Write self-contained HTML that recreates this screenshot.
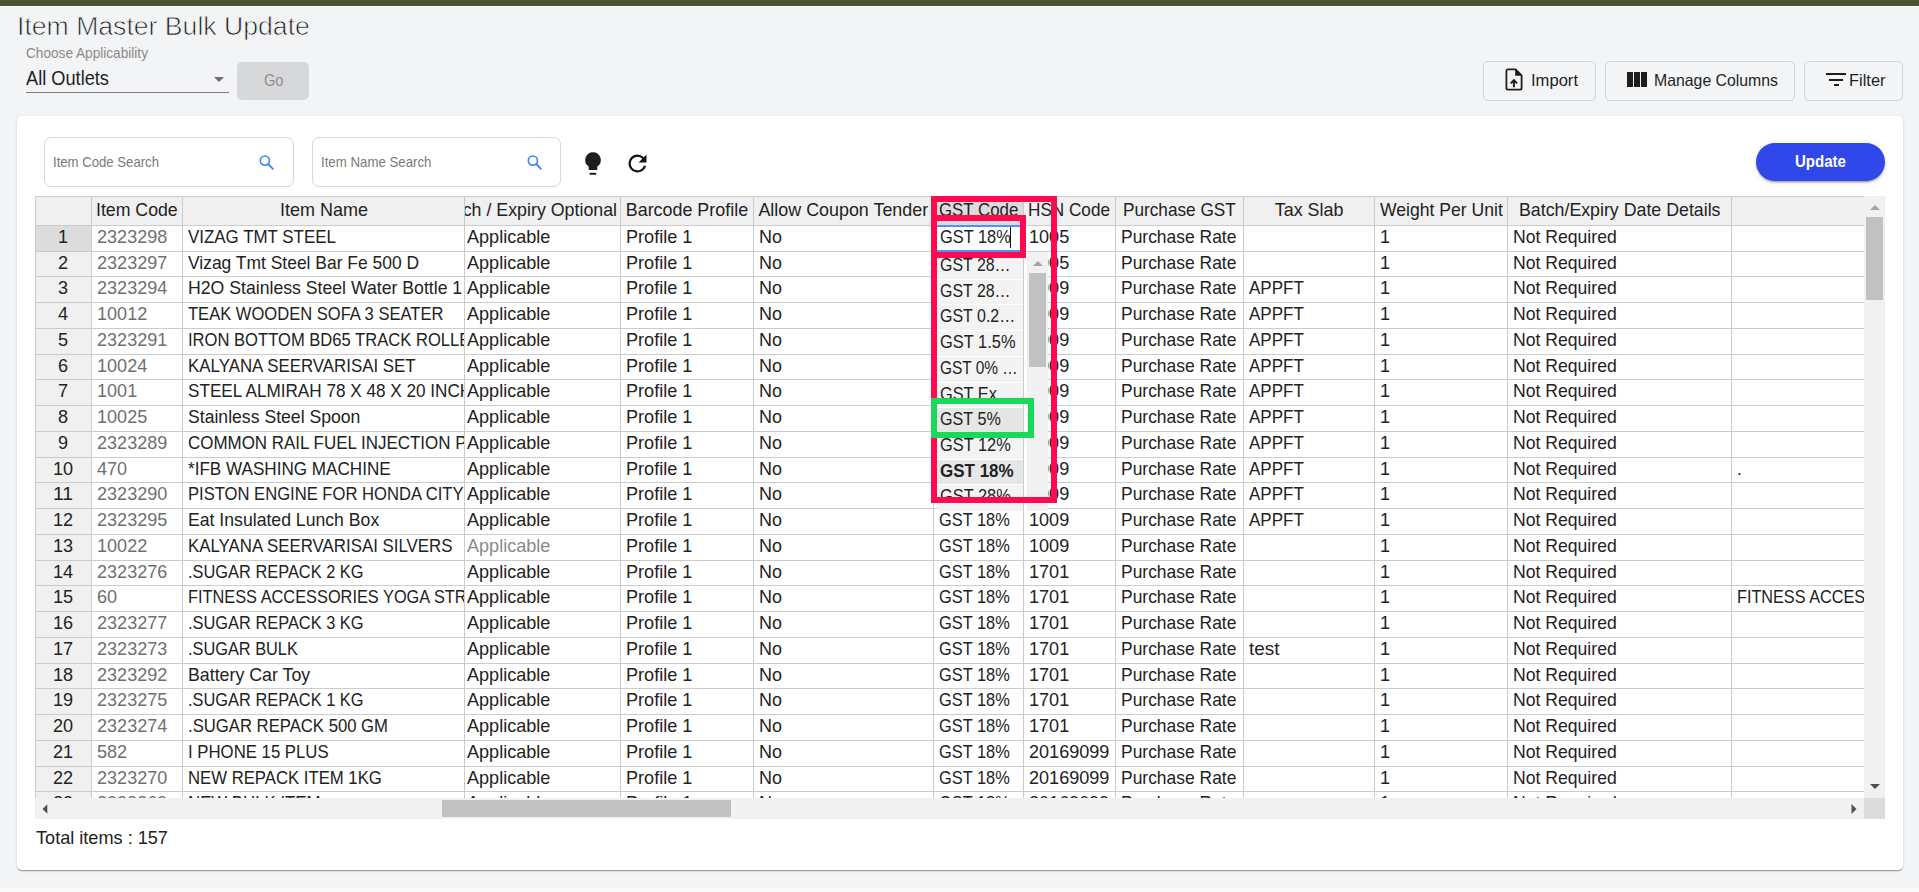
<!DOCTYPE html>
<html><head><meta charset="utf-8"><style>
html,body{margin:0;padding:0;}
body{width:1919px;height:892px;overflow:hidden;background:#f3f4f6;position:relative;font-family:"Liberation Sans",sans-serif;}
.r{position:absolute;box-sizing:content-box;}
.t{position:absolute;white-space:nowrap;line-height:1;transform-origin:0 0;}
.c{position:absolute;overflow:hidden;}
</style></head><body>
<div class="r" style="left:0px;top:0px;width:1919px;height:6px;background:#4b5533;"></div>
<div class="r" style="left:0px;top:6px;width:1919px;height:1px;background:#fbfbfb;"></div>
<div class="t" style="left:17.00px;top:12.72px;font-size:26.2px;color:#1e1e1e;transform:scaleX(1.0162);-webkit-text-stroke:0.75px #f3f4f6;">Item Master Bulk Update</div>
<div class="t" style="left:26.30px;top:46.14px;font-size:14.6px;color:#8a8a8a;transform:scaleX(0.9337);">Choose Applicability</div>
<div class="t" style="left:25.80px;top:68.68px;font-size:19.4px;color:#1f1f1f;transform:scaleX(0.9388);">All Outlets</div>
<div class="r" style="left:26px;top:92px;width:203px;height:1px;background:#7b7b80;"></div>
<svg class="r" style="left:213px;top:76px" width="12" height="7"><path d="M1 1h10l-5 5z" fill="#6e6d72"/></svg>
<div class="r" style="left:237px;top:62px;width:72px;height:38px;background:#d7d8da;border-radius:5px"></div>
<div class="t" style="left:263.55px;top:71.79px;font-size:16.2px;color:#8f8f8f;transform:scaleX(0.9023);">Go</div>
<div class="r" style="left:1483px;top:61px;width:111px;height:38px;border:1px solid #d2d3d6;border-radius:5px"></div>
<div class="r" style="left:1605px;top:61px;width:188px;height:38px;border:1px solid #d2d3d6;border-radius:5px"></div>
<div class="r" style="left:1804px;top:61px;width:97px;height:38px;border:1px solid #d2d3d6;border-radius:5px"></div>
<svg class="r" style="left:1503px;top:67px" width="22" height="25" viewBox="0 0 22 25"><path d="M4.9 2.4H12.6L18.6 8.4V21a1.6 1.6 0 0 1-1.6 1.6H5a1.6 1.6 0 0 1-1.6-1.6V4a1.6 1.6 0 0 1 1.5-1.6z" fill="none" stroke="#1e1e1e" stroke-width="1.8"/><path d="M12.2 2.4V8.8H18.6z" fill="#1e1e1e"/><path d="M10.9 20.2V13.2M7.7 16.4l3.2-3.2 3.2 3.2" fill="none" stroke="#1e1e1e" stroke-width="2"/></svg>
<div class="t" style="left:1530.50px;top:71.53px;font-size:16.5px;color:#1f1f1f;transform:scaleX(1.0051);">Import</div>
<div class="r" style="left:1627px;top:72px;width:5.5px;height:15px;background:#1e1e1e;"></div>
<div class="r" style="left:1634px;top:72px;width:5.5px;height:15px;background:#1e1e1e;"></div>
<div class="r" style="left:1641px;top:72px;width:5.5px;height:15px;background:#1e1e1e;"></div>
<div class="t" style="left:1653.80px;top:71.53px;font-size:16.5px;color:#1f1f1f;transform:scaleX(0.9589);">Manage Columns</div>
<div class="r" style="left:1826px;top:73px;width:20px;height:2px;background:#1e1e1e;"></div>
<div class="r" style="left:1829px;top:78.5px;width:14px;height:2.0px;background:#1e1e1e;"></div>
<div class="r" style="left:1834px;top:84px;width:4.5px;height:2px;background:#1e1e1e;"></div>
<div class="t" style="left:1848.70px;top:71.53px;font-size:16.5px;color:#1f1f1f;transform:scaleX(0.9955);">Filter</div>
<div class="r" style="left:17px;top:116px;width:1886px;height:754px;background:#fff;border-radius:5px;box-shadow:0px 2px 1px -1px rgba(0,0,0,0.2),0px 1px 1px 0px rgba(0,0,0,0.14),0px 1px 3px 0px rgba(0,0,0,0.12)"></div>
<div class="r" style="left:44px;top:137px;width:248px;height:48px;border:1px solid #d6d6d6;border-radius:7px"></div>
<div class="t" style="left:53.30px;top:155.00px;font-size:14.3px;color:#7a7a7a;transform:scaleX(0.9197);">Item Code Search</div>
<svg class="r" style="left:258px;top:154px" width="17" height="17" viewBox="0 0 17 17"><circle cx="6.9" cy="6.6" r="4.6" fill="none" stroke="#3f83ee" stroke-width="1.6"/><path d="M10.2 10l5.2 5.3" stroke="#3f83ee" stroke-width="1.8"/></svg>
<div class="r" style="left:312px;top:137px;width:247px;height:48px;border:1px solid #d6d6d6;border-radius:7px"></div>
<div class="t" style="left:320.80px;top:155.00px;font-size:14.3px;color:#7a7a7a;transform:scaleX(0.9269);">Item Name Search</div>
<svg class="r" style="left:526px;top:154px" width="17" height="17" viewBox="0 0 17 17"><circle cx="6.9" cy="6.6" r="4.6" fill="none" stroke="#3f83ee" stroke-width="1.6"/><path d="M10.2 10l5.2 5.3" stroke="#3f83ee" stroke-width="1.8"/></svg>
<svg class="r" style="left:583px;top:151px" width="20" height="26" viewBox="0 0 20 26"><path d="M10 1.2a7.8 7.8 0 0 0-4.3 14.3V19h8.6v-3.5A7.8 7.8 0 0 0 10 1.2z" fill="#1e1e1e"/><rect x="6.6" y="21.8" width="6.6" height="2" fill="#1e1e1e"/></svg>
<svg class="r" style="left:623.8px;top:149.6px" width="27" height="27" viewBox="0 0 24 24"><path d="M17.65 6.35A7.96 7.96 0 0 0 12 4a8 8 0 1 0 7.73 10h-2.08A6 6 0 1 1 12 6c1.66 0 3.14.69 4.22 1.78L13 11h7V4z" fill="#111"/></svg>
<div class="r" style="left:1756px;top:143px;width:129px;height:38px;background:#3048ea;border-radius:19px;box-shadow:0px 3px 1px -2px rgba(0,0,0,0.2),0px 2px 2px 0px rgba(0,0,0,0.14),0px 1px 5px 0px rgba(0,0,0,0.12)"></div>
<div class="t" style="left:1795.20px;top:153.02px;font-size:16.4px;color:#fff;font-weight:bold;transform:scaleX(0.9176);">Update</div>
<div class="r" style="left:0px;top:888px;width:1919px;height:4px;background:#fafafa;"></div>
<div class="t" style="left:35.50px;top:829.12px;font-size:18.4px;color:#222;transform:scaleX(0.9853);">Total items : 157</div>
<div class="r" style="left:36px;top:197px;width:1828px;height:28px;background:#f0f0f0;"></div>
<div class="r" style="left:36px;top:226px;width:55px;height:572px;background:#f0f0f0;"></div>
<div class="r" style="left:36px;top:226px;width:55px;height:25px;background:#dcdcdc;"></div>
<div class="r" style="left:934px;top:197px;width:89px;height:28px;background:#dcdcdc;"></div>
<div class="c" style="left:92px;top:197px;width:90px;height:28px"><div class="t" style="left:4.12px;top:4.65px;font-size:17.9px;color:#222;transform:scaleX(0.9901);">Item Code</div></div>
<div class="c" style="left:183px;top:197px;width:281px;height:28px"><div class="t" style="left:96.51px;top:4.65px;font-size:17.9px;color:#222;transform:scaleX(1.0052);">Item Name</div></div>
<div class="c" style="left:465px;top:197px;width:155px;height:28px"><div class="t" style="left:-29.34px;top:4.65px;font-size:17.9px;color:#222;transform:scaleX(0.9949);">Batch / Expiry Optional</div></div>
<div class="c" style="left:621px;top:197px;width:132px;height:28px"><div class="t" style="left:4.77px;top:4.65px;font-size:17.9px;color:#222;">Barcode Profile</div></div>
<div class="c" style="left:754px;top:197px;width:179px;height:28px"><div class="t" style="left:4.42px;top:4.65px;font-size:17.9px;color:#222;">Allow Coupon Tender</div></div>
<div class="c" style="left:934px;top:197px;width:89px;height:28px"><div class="t" style="left:4.82px;top:4.65px;font-size:17.9px;color:#222;transform:scaleX(0.9421);">GST Code</div></div>
<div class="c" style="left:1024px;top:197px;width:91px;height:28px"><div class="t" style="left:4.49px;top:4.65px;font-size:17.9px;color:#222;transform:scaleX(0.9587);">HSN Code</div></div>
<div class="c" style="left:1116px;top:197px;width:127px;height:28px"><div class="t" style="left:7.07px;top:4.65px;font-size:17.9px;color:#222;transform:scaleX(0.9613);">Purchase GST</div></div>
<div class="c" style="left:1244px;top:197px;width:130px;height:28px"><div class="t" style="left:30.76px;top:4.65px;font-size:17.9px;color:#222;">Tax Slab</div></div>
<div class="c" style="left:1375px;top:197px;width:132px;height:28px"><div class="t" style="left:4.57px;top:4.65px;font-size:17.9px;color:#222;transform:scaleX(0.9826);">Weight Per Unit</div></div>
<div class="c" style="left:1508px;top:197px;width:223px;height:28px"><div class="t" style="left:10.70px;top:4.65px;font-size:17.9px;color:#222;transform:scaleX(0.9933);">Batch/Expiry Date Details</div></div>
<div class="c" style="left:36px;top:226px;width:55px;height:25px"><div class="t" style="left:22.47px;top:3.00px;font-size:17.9px;color:#222;transform:scaleX(1.0096);">1</div></div>
<div class="c" style="left:92px;top:226px;width:90px;height:25px"><div class="t" style="left:4.50px;top:3.00px;font-size:17.9px;color:#6f6f6f;transform:scaleX(1.0096);">2323298</div></div>
<div class="c" style="left:183px;top:226px;width:281px;height:25px"><div class="t" style="left:4.50px;top:3.00px;font-size:17.9px;color:#222;transform:scaleX(0.9453);">VIZAG TMT STEEL</div></div>
<div class="c" style="left:465px;top:226px;width:155px;height:25px"><div class="t" style="left:1.60px;top:3.00px;font-size:17.9px;color:#222;transform:scaleX(1.0101);">Applicable</div></div>
<div class="c" style="left:621px;top:226px;width:132px;height:25px"><div class="t" style="left:4.50px;top:3.00px;font-size:17.9px;color:#222;transform:scaleX(1.0116);">Profile 1</div></div>
<div class="c" style="left:754px;top:226px;width:179px;height:25px"><div class="t" style="left:4.50px;top:3.00px;font-size:17.9px;color:#222;transform:scaleX(1.0037);">No</div></div>
<div class="c" style="left:934px;top:226px;width:89px;height:25px"><div class="t" style="left:4.50px;top:3.00px;font-size:17.9px;color:#222;transform:scaleX(0.9165);">GST 18%</div></div>
<div class="c" style="left:1024px;top:226px;width:91px;height:25px"><div class="t" style="left:4.50px;top:3.00px;font-size:17.9px;color:#222;transform:scaleX(1.0096);">1005</div></div>
<div class="c" style="left:1116px;top:226px;width:127px;height:25px"><div class="t" style="left:4.50px;top:3.00px;font-size:17.9px;color:#222;transform:scaleX(0.9750);">Purchase Rate</div></div>
<div class="c" style="left:1375px;top:226px;width:132px;height:25px"><div class="t" style="left:4.50px;top:3.00px;font-size:17.9px;color:#222;transform:scaleX(1.0096);">1</div></div>
<div class="c" style="left:1508px;top:226px;width:223px;height:25px"><div class="t" style="left:4.50px;top:3.00px;font-size:17.9px;color:#222;transform:scaleX(0.9838);">Not Required</div></div>
<div class="c" style="left:36px;top:252px;width:55px;height:24px"><div class="t" style="left:22.47px;top:3.00px;font-size:17.9px;color:#222;transform:scaleX(1.0096);">2</div></div>
<div class="c" style="left:92px;top:252px;width:90px;height:24px"><div class="t" style="left:4.50px;top:3.00px;font-size:17.9px;color:#6f6f6f;transform:scaleX(1.0096);">2323297</div></div>
<div class="c" style="left:183px;top:252px;width:281px;height:24px"><div class="t" style="left:4.50px;top:3.00px;font-size:17.9px;color:#222;transform:scaleX(0.9751);">Vizag Tmt Steel Bar Fe 500 D</div></div>
<div class="c" style="left:465px;top:252px;width:155px;height:24px"><div class="t" style="left:1.60px;top:3.00px;font-size:17.9px;color:#222;transform:scaleX(1.0101);">Applicable</div></div>
<div class="c" style="left:621px;top:252px;width:132px;height:24px"><div class="t" style="left:4.50px;top:3.00px;font-size:17.9px;color:#222;transform:scaleX(1.0116);">Profile 1</div></div>
<div class="c" style="left:754px;top:252px;width:179px;height:24px"><div class="t" style="left:4.50px;top:3.00px;font-size:17.9px;color:#222;transform:scaleX(1.0037);">No</div></div>
<div class="c" style="left:934px;top:252px;width:89px;height:24px"><div class="t" style="left:4.50px;top:3.00px;font-size:17.9px;color:#222;transform:scaleX(0.9165);">GST 18%</div></div>
<div class="c" style="left:1024px;top:252px;width:91px;height:24px"><div class="t" style="left:4.50px;top:3.00px;font-size:17.9px;color:#222;transform:scaleX(1.0096);">1005</div></div>
<div class="c" style="left:1116px;top:252px;width:127px;height:24px"><div class="t" style="left:4.50px;top:3.00px;font-size:17.9px;color:#222;transform:scaleX(0.9750);">Purchase Rate</div></div>
<div class="c" style="left:1375px;top:252px;width:132px;height:24px"><div class="t" style="left:4.50px;top:3.00px;font-size:17.9px;color:#222;transform:scaleX(1.0096);">1</div></div>
<div class="c" style="left:1508px;top:252px;width:223px;height:24px"><div class="t" style="left:4.50px;top:3.00px;font-size:17.9px;color:#222;transform:scaleX(0.9838);">Not Required</div></div>
<div class="c" style="left:36px;top:277px;width:55px;height:25px"><div class="t" style="left:22.47px;top:3.00px;font-size:17.9px;color:#222;transform:scaleX(1.0096);">3</div></div>
<div class="c" style="left:92px;top:277px;width:90px;height:25px"><div class="t" style="left:4.50px;top:3.00px;font-size:17.9px;color:#6f6f6f;transform:scaleX(1.0096);">2323294</div></div>
<div class="c" style="left:183px;top:277px;width:281px;height:25px"><div class="t" style="left:4.50px;top:3.00px;font-size:17.9px;color:#222;transform:scaleX(0.9871);">H2O Stainless Steel Water Bottle 1 Ltr</div></div>
<div class="c" style="left:465px;top:277px;width:155px;height:25px"><div class="t" style="left:1.60px;top:3.00px;font-size:17.9px;color:#222;transform:scaleX(1.0101);">Applicable</div></div>
<div class="c" style="left:621px;top:277px;width:132px;height:25px"><div class="t" style="left:4.50px;top:3.00px;font-size:17.9px;color:#222;transform:scaleX(1.0116);">Profile 1</div></div>
<div class="c" style="left:754px;top:277px;width:179px;height:25px"><div class="t" style="left:4.50px;top:3.00px;font-size:17.9px;color:#222;transform:scaleX(1.0037);">No</div></div>
<div class="c" style="left:934px;top:277px;width:89px;height:25px"><div class="t" style="left:4.50px;top:3.00px;font-size:17.9px;color:#222;transform:scaleX(0.9165);">GST 18%</div></div>
<div class="c" style="left:1024px;top:277px;width:91px;height:25px"><div class="t" style="left:4.50px;top:3.00px;font-size:17.9px;color:#222;transform:scaleX(1.0096);">1009</div></div>
<div class="c" style="left:1116px;top:277px;width:127px;height:25px"><div class="t" style="left:4.50px;top:3.00px;font-size:17.9px;color:#222;transform:scaleX(0.9750);">Purchase Rate</div></div>
<div class="c" style="left:1244px;top:277px;width:130px;height:25px"><div class="t" style="left:4.50px;top:3.00px;font-size:17.9px;color:#222;transform:scaleX(0.9504);">APPFT</div></div>
<div class="c" style="left:1375px;top:277px;width:132px;height:25px"><div class="t" style="left:4.50px;top:3.00px;font-size:17.9px;color:#222;transform:scaleX(1.0096);">1</div></div>
<div class="c" style="left:1508px;top:277px;width:223px;height:25px"><div class="t" style="left:4.50px;top:3.00px;font-size:17.9px;color:#222;transform:scaleX(0.9838);">Not Required</div></div>
<div class="c" style="left:36px;top:303px;width:55px;height:25px"><div class="t" style="left:22.47px;top:3.00px;font-size:17.9px;color:#222;transform:scaleX(1.0096);">4</div></div>
<div class="c" style="left:92px;top:303px;width:90px;height:25px"><div class="t" style="left:4.50px;top:3.00px;font-size:17.9px;color:#6f6f6f;transform:scaleX(1.0096);">10012</div></div>
<div class="c" style="left:183px;top:303px;width:281px;height:25px"><div class="t" style="left:4.50px;top:3.00px;font-size:17.9px;color:#222;transform:scaleX(0.9252);">TEAK WOODEN SOFA 3 SEATER</div></div>
<div class="c" style="left:465px;top:303px;width:155px;height:25px"><div class="t" style="left:1.60px;top:3.00px;font-size:17.9px;color:#222;transform:scaleX(1.0101);">Applicable</div></div>
<div class="c" style="left:621px;top:303px;width:132px;height:25px"><div class="t" style="left:4.50px;top:3.00px;font-size:17.9px;color:#222;transform:scaleX(1.0116);">Profile 1</div></div>
<div class="c" style="left:754px;top:303px;width:179px;height:25px"><div class="t" style="left:4.50px;top:3.00px;font-size:17.9px;color:#222;transform:scaleX(1.0037);">No</div></div>
<div class="c" style="left:934px;top:303px;width:89px;height:25px"><div class="t" style="left:4.50px;top:3.00px;font-size:17.9px;color:#222;transform:scaleX(0.9165);">GST 18%</div></div>
<div class="c" style="left:1024px;top:303px;width:91px;height:25px"><div class="t" style="left:4.50px;top:3.00px;font-size:17.9px;color:#222;transform:scaleX(1.0096);">1009</div></div>
<div class="c" style="left:1116px;top:303px;width:127px;height:25px"><div class="t" style="left:4.50px;top:3.00px;font-size:17.9px;color:#222;transform:scaleX(0.9750);">Purchase Rate</div></div>
<div class="c" style="left:1244px;top:303px;width:130px;height:25px"><div class="t" style="left:4.50px;top:3.00px;font-size:17.9px;color:#222;transform:scaleX(0.9504);">APPFT</div></div>
<div class="c" style="left:1375px;top:303px;width:132px;height:25px"><div class="t" style="left:4.50px;top:3.00px;font-size:17.9px;color:#222;transform:scaleX(1.0096);">1</div></div>
<div class="c" style="left:1508px;top:303px;width:223px;height:25px"><div class="t" style="left:4.50px;top:3.00px;font-size:17.9px;color:#222;transform:scaleX(0.9838);">Not Required</div></div>
<div class="c" style="left:36px;top:329px;width:55px;height:25px"><div class="t" style="left:22.47px;top:3.00px;font-size:17.9px;color:#222;transform:scaleX(1.0096);">5</div></div>
<div class="c" style="left:92px;top:329px;width:90px;height:25px"><div class="t" style="left:4.50px;top:3.00px;font-size:17.9px;color:#6f6f6f;transform:scaleX(1.0096);">2323291</div></div>
<div class="c" style="left:183px;top:329px;width:281px;height:25px"><div class="t" style="left:4.50px;top:3.00px;font-size:17.9px;color:#222;transform:scaleX(0.9269);">IRON BOTTOM BD65 TRACK ROLLER</div></div>
<div class="c" style="left:465px;top:329px;width:155px;height:25px"><div class="t" style="left:1.60px;top:3.00px;font-size:17.9px;color:#222;transform:scaleX(1.0101);">Applicable</div></div>
<div class="c" style="left:621px;top:329px;width:132px;height:25px"><div class="t" style="left:4.50px;top:3.00px;font-size:17.9px;color:#222;transform:scaleX(1.0116);">Profile 1</div></div>
<div class="c" style="left:754px;top:329px;width:179px;height:25px"><div class="t" style="left:4.50px;top:3.00px;font-size:17.9px;color:#222;transform:scaleX(1.0037);">No</div></div>
<div class="c" style="left:934px;top:329px;width:89px;height:25px"><div class="t" style="left:4.50px;top:3.00px;font-size:17.9px;color:#222;transform:scaleX(0.9165);">GST 18%</div></div>
<div class="c" style="left:1024px;top:329px;width:91px;height:25px"><div class="t" style="left:4.50px;top:3.00px;font-size:17.9px;color:#222;transform:scaleX(1.0096);">1009</div></div>
<div class="c" style="left:1116px;top:329px;width:127px;height:25px"><div class="t" style="left:4.50px;top:3.00px;font-size:17.9px;color:#222;transform:scaleX(0.9750);">Purchase Rate</div></div>
<div class="c" style="left:1244px;top:329px;width:130px;height:25px"><div class="t" style="left:4.50px;top:3.00px;font-size:17.9px;color:#222;transform:scaleX(0.9504);">APPFT</div></div>
<div class="c" style="left:1375px;top:329px;width:132px;height:25px"><div class="t" style="left:4.50px;top:3.00px;font-size:17.9px;color:#222;transform:scaleX(1.0096);">1</div></div>
<div class="c" style="left:1508px;top:329px;width:223px;height:25px"><div class="t" style="left:4.50px;top:3.00px;font-size:17.9px;color:#222;transform:scaleX(0.9838);">Not Required</div></div>
<div class="c" style="left:36px;top:355px;width:55px;height:24px"><div class="t" style="left:22.47px;top:3.00px;font-size:17.9px;color:#222;transform:scaleX(1.0096);">6</div></div>
<div class="c" style="left:92px;top:355px;width:90px;height:24px"><div class="t" style="left:4.50px;top:3.00px;font-size:17.9px;color:#6f6f6f;transform:scaleX(1.0096);">10024</div></div>
<div class="c" style="left:183px;top:355px;width:281px;height:24px"><div class="t" style="left:4.50px;top:3.00px;font-size:17.9px;color:#222;transform:scaleX(0.9436);">KALYANA SEERVARISAI SET</div></div>
<div class="c" style="left:465px;top:355px;width:155px;height:24px"><div class="t" style="left:1.60px;top:3.00px;font-size:17.9px;color:#222;transform:scaleX(1.0101);">Applicable</div></div>
<div class="c" style="left:621px;top:355px;width:132px;height:24px"><div class="t" style="left:4.50px;top:3.00px;font-size:17.9px;color:#222;transform:scaleX(1.0116);">Profile 1</div></div>
<div class="c" style="left:754px;top:355px;width:179px;height:24px"><div class="t" style="left:4.50px;top:3.00px;font-size:17.9px;color:#222;transform:scaleX(1.0037);">No</div></div>
<div class="c" style="left:934px;top:355px;width:89px;height:24px"><div class="t" style="left:4.50px;top:3.00px;font-size:17.9px;color:#222;transform:scaleX(0.9165);">GST 18%</div></div>
<div class="c" style="left:1024px;top:355px;width:91px;height:24px"><div class="t" style="left:4.50px;top:3.00px;font-size:17.9px;color:#222;transform:scaleX(1.0096);">1009</div></div>
<div class="c" style="left:1116px;top:355px;width:127px;height:24px"><div class="t" style="left:4.50px;top:3.00px;font-size:17.9px;color:#222;transform:scaleX(0.9750);">Purchase Rate</div></div>
<div class="c" style="left:1244px;top:355px;width:130px;height:24px"><div class="t" style="left:4.50px;top:3.00px;font-size:17.9px;color:#222;transform:scaleX(0.9504);">APPFT</div></div>
<div class="c" style="left:1375px;top:355px;width:132px;height:24px"><div class="t" style="left:4.50px;top:3.00px;font-size:17.9px;color:#222;transform:scaleX(1.0096);">1</div></div>
<div class="c" style="left:1508px;top:355px;width:223px;height:24px"><div class="t" style="left:4.50px;top:3.00px;font-size:17.9px;color:#222;transform:scaleX(0.9838);">Not Required</div></div>
<div class="c" style="left:36px;top:380px;width:55px;height:25px"><div class="t" style="left:22.47px;top:3.00px;font-size:17.9px;color:#222;transform:scaleX(1.0096);">7</div></div>
<div class="c" style="left:92px;top:380px;width:90px;height:25px"><div class="t" style="left:4.50px;top:3.00px;font-size:17.9px;color:#6f6f6f;transform:scaleX(1.0096);">1001</div></div>
<div class="c" style="left:183px;top:380px;width:281px;height:25px"><div class="t" style="left:4.50px;top:3.00px;font-size:17.9px;color:#222;transform:scaleX(0.9580);">STEEL ALMIRAH 78 X 48 X 20 INCH</div></div>
<div class="c" style="left:465px;top:380px;width:155px;height:25px"><div class="t" style="left:1.60px;top:3.00px;font-size:17.9px;color:#222;transform:scaleX(1.0101);">Applicable</div></div>
<div class="c" style="left:621px;top:380px;width:132px;height:25px"><div class="t" style="left:4.50px;top:3.00px;font-size:17.9px;color:#222;transform:scaleX(1.0116);">Profile 1</div></div>
<div class="c" style="left:754px;top:380px;width:179px;height:25px"><div class="t" style="left:4.50px;top:3.00px;font-size:17.9px;color:#222;transform:scaleX(1.0037);">No</div></div>
<div class="c" style="left:934px;top:380px;width:89px;height:25px"><div class="t" style="left:4.50px;top:3.00px;font-size:17.9px;color:#222;transform:scaleX(0.9165);">GST 18%</div></div>
<div class="c" style="left:1024px;top:380px;width:91px;height:25px"><div class="t" style="left:4.50px;top:3.00px;font-size:17.9px;color:#222;transform:scaleX(1.0096);">1009</div></div>
<div class="c" style="left:1116px;top:380px;width:127px;height:25px"><div class="t" style="left:4.50px;top:3.00px;font-size:17.9px;color:#222;transform:scaleX(0.9750);">Purchase Rate</div></div>
<div class="c" style="left:1244px;top:380px;width:130px;height:25px"><div class="t" style="left:4.50px;top:3.00px;font-size:17.9px;color:#222;transform:scaleX(0.9504);">APPFT</div></div>
<div class="c" style="left:1375px;top:380px;width:132px;height:25px"><div class="t" style="left:4.50px;top:3.00px;font-size:17.9px;color:#222;transform:scaleX(1.0096);">1</div></div>
<div class="c" style="left:1508px;top:380px;width:223px;height:25px"><div class="t" style="left:4.50px;top:3.00px;font-size:17.9px;color:#222;transform:scaleX(0.9838);">Not Required</div></div>
<div class="c" style="left:36px;top:406px;width:55px;height:25px"><div class="t" style="left:22.47px;top:3.00px;font-size:17.9px;color:#222;transform:scaleX(1.0096);">8</div></div>
<div class="c" style="left:92px;top:406px;width:90px;height:25px"><div class="t" style="left:4.50px;top:3.00px;font-size:17.9px;color:#6f6f6f;transform:scaleX(1.0096);">10025</div></div>
<div class="c" style="left:183px;top:406px;width:281px;height:25px"><div class="t" style="left:4.50px;top:3.00px;font-size:17.9px;color:#222;transform:scaleX(0.9848);">Stainless Steel Spoon</div></div>
<div class="c" style="left:465px;top:406px;width:155px;height:25px"><div class="t" style="left:1.60px;top:3.00px;font-size:17.9px;color:#222;transform:scaleX(1.0101);">Applicable</div></div>
<div class="c" style="left:621px;top:406px;width:132px;height:25px"><div class="t" style="left:4.50px;top:3.00px;font-size:17.9px;color:#222;transform:scaleX(1.0116);">Profile 1</div></div>
<div class="c" style="left:754px;top:406px;width:179px;height:25px"><div class="t" style="left:4.50px;top:3.00px;font-size:17.9px;color:#222;transform:scaleX(1.0037);">No</div></div>
<div class="c" style="left:934px;top:406px;width:89px;height:25px"><div class="t" style="left:4.50px;top:3.00px;font-size:17.9px;color:#222;transform:scaleX(0.9165);">GST 18%</div></div>
<div class="c" style="left:1024px;top:406px;width:91px;height:25px"><div class="t" style="left:4.50px;top:3.00px;font-size:17.9px;color:#222;transform:scaleX(1.0096);">1009</div></div>
<div class="c" style="left:1116px;top:406px;width:127px;height:25px"><div class="t" style="left:4.50px;top:3.00px;font-size:17.9px;color:#222;transform:scaleX(0.9750);">Purchase Rate</div></div>
<div class="c" style="left:1244px;top:406px;width:130px;height:25px"><div class="t" style="left:4.50px;top:3.00px;font-size:17.9px;color:#222;transform:scaleX(0.9504);">APPFT</div></div>
<div class="c" style="left:1375px;top:406px;width:132px;height:25px"><div class="t" style="left:4.50px;top:3.00px;font-size:17.9px;color:#222;transform:scaleX(1.0096);">1</div></div>
<div class="c" style="left:1508px;top:406px;width:223px;height:25px"><div class="t" style="left:4.50px;top:3.00px;font-size:17.9px;color:#222;transform:scaleX(0.9838);">Not Required</div></div>
<div class="c" style="left:36px;top:432px;width:55px;height:25px"><div class="t" style="left:22.47px;top:3.00px;font-size:17.9px;color:#222;transform:scaleX(1.0096);">9</div></div>
<div class="c" style="left:92px;top:432px;width:90px;height:25px"><div class="t" style="left:4.50px;top:3.00px;font-size:17.9px;color:#6f6f6f;transform:scaleX(1.0096);">2323289</div></div>
<div class="c" style="left:183px;top:432px;width:281px;height:25px"><div class="t" style="left:4.50px;top:3.00px;font-size:17.9px;color:#222;transform:scaleX(0.9474);">COMMON RAIL FUEL INJECTION PUMP</div></div>
<div class="c" style="left:465px;top:432px;width:155px;height:25px"><div class="t" style="left:1.60px;top:3.00px;font-size:17.9px;color:#222;transform:scaleX(1.0101);">Applicable</div></div>
<div class="c" style="left:621px;top:432px;width:132px;height:25px"><div class="t" style="left:4.50px;top:3.00px;font-size:17.9px;color:#222;transform:scaleX(1.0116);">Profile 1</div></div>
<div class="c" style="left:754px;top:432px;width:179px;height:25px"><div class="t" style="left:4.50px;top:3.00px;font-size:17.9px;color:#222;transform:scaleX(1.0037);">No</div></div>
<div class="c" style="left:934px;top:432px;width:89px;height:25px"><div class="t" style="left:4.50px;top:3.00px;font-size:17.9px;color:#222;transform:scaleX(0.9165);">GST 18%</div></div>
<div class="c" style="left:1024px;top:432px;width:91px;height:25px"><div class="t" style="left:4.50px;top:3.00px;font-size:17.9px;color:#222;transform:scaleX(1.0096);">1009</div></div>
<div class="c" style="left:1116px;top:432px;width:127px;height:25px"><div class="t" style="left:4.50px;top:3.00px;font-size:17.9px;color:#222;transform:scaleX(0.9750);">Purchase Rate</div></div>
<div class="c" style="left:1244px;top:432px;width:130px;height:25px"><div class="t" style="left:4.50px;top:3.00px;font-size:17.9px;color:#222;transform:scaleX(0.9504);">APPFT</div></div>
<div class="c" style="left:1375px;top:432px;width:132px;height:25px"><div class="t" style="left:4.50px;top:3.00px;font-size:17.9px;color:#222;transform:scaleX(1.0096);">1</div></div>
<div class="c" style="left:1508px;top:432px;width:223px;height:25px"><div class="t" style="left:4.50px;top:3.00px;font-size:17.9px;color:#222;transform:scaleX(0.9838);">Not Required</div></div>
<div class="c" style="left:36px;top:458px;width:55px;height:24px"><div class="t" style="left:17.45px;top:3.00px;font-size:17.9px;color:#222;transform:scaleX(1.0096);">10</div></div>
<div class="c" style="left:92px;top:458px;width:90px;height:24px"><div class="t" style="left:4.50px;top:3.00px;font-size:17.9px;color:#6f6f6f;transform:scaleX(1.0096);">470</div></div>
<div class="c" style="left:183px;top:458px;width:281px;height:24px"><div class="t" style="left:4.50px;top:3.00px;font-size:17.9px;color:#222;transform:scaleX(0.9557);">*IFB WASHING MACHINE</div></div>
<div class="c" style="left:465px;top:458px;width:155px;height:24px"><div class="t" style="left:1.60px;top:3.00px;font-size:17.9px;color:#222;transform:scaleX(1.0101);">Applicable</div></div>
<div class="c" style="left:621px;top:458px;width:132px;height:24px"><div class="t" style="left:4.50px;top:3.00px;font-size:17.9px;color:#222;transform:scaleX(1.0116);">Profile 1</div></div>
<div class="c" style="left:754px;top:458px;width:179px;height:24px"><div class="t" style="left:4.50px;top:3.00px;font-size:17.9px;color:#222;transform:scaleX(1.0037);">No</div></div>
<div class="c" style="left:934px;top:458px;width:89px;height:24px"><div class="t" style="left:4.50px;top:3.00px;font-size:17.9px;color:#222;transform:scaleX(0.9165);">GST 18%</div></div>
<div class="c" style="left:1024px;top:458px;width:91px;height:24px"><div class="t" style="left:4.50px;top:3.00px;font-size:17.9px;color:#222;transform:scaleX(1.0096);">1009</div></div>
<div class="c" style="left:1116px;top:458px;width:127px;height:24px"><div class="t" style="left:4.50px;top:3.00px;font-size:17.9px;color:#222;transform:scaleX(0.9750);">Purchase Rate</div></div>
<div class="c" style="left:1244px;top:458px;width:130px;height:24px"><div class="t" style="left:4.50px;top:3.00px;font-size:17.9px;color:#222;transform:scaleX(0.9504);">APPFT</div></div>
<div class="c" style="left:1375px;top:458px;width:132px;height:24px"><div class="t" style="left:4.50px;top:3.00px;font-size:17.9px;color:#222;transform:scaleX(1.0096);">1</div></div>
<div class="c" style="left:1508px;top:458px;width:223px;height:24px"><div class="t" style="left:4.50px;top:3.00px;font-size:17.9px;color:#222;transform:scaleX(0.9838);">Not Required</div></div>
<div class="c" style="left:1732px;top:458px;width:132px;height:24px"><div class="t" style="left:4.50px;top:3.00px;font-size:17.9px;color:#222;transform:scaleX(0.9466);">.</div></div>
<div class="c" style="left:36px;top:483px;width:55px;height:25px"><div class="t" style="left:17.45px;top:3.00px;font-size:17.9px;color:#222;transform:scaleX(1.0818);">11</div></div>
<div class="c" style="left:92px;top:483px;width:90px;height:25px"><div class="t" style="left:4.50px;top:3.00px;font-size:17.9px;color:#6f6f6f;transform:scaleX(1.0096);">2323290</div></div>
<div class="c" style="left:183px;top:483px;width:281px;height:25px"><div class="t" style="left:4.50px;top:3.00px;font-size:17.9px;color:#222;transform:scaleX(0.9278);">PISTON ENGINE FOR HONDA CITY</div></div>
<div class="c" style="left:465px;top:483px;width:155px;height:25px"><div class="t" style="left:1.60px;top:3.00px;font-size:17.9px;color:#222;transform:scaleX(1.0101);">Applicable</div></div>
<div class="c" style="left:621px;top:483px;width:132px;height:25px"><div class="t" style="left:4.50px;top:3.00px;font-size:17.9px;color:#222;transform:scaleX(1.0116);">Profile 1</div></div>
<div class="c" style="left:754px;top:483px;width:179px;height:25px"><div class="t" style="left:4.50px;top:3.00px;font-size:17.9px;color:#222;transform:scaleX(1.0037);">No</div></div>
<div class="c" style="left:934px;top:483px;width:89px;height:25px"><div class="t" style="left:4.50px;top:3.00px;font-size:17.9px;color:#222;transform:scaleX(0.9165);">GST 18%</div></div>
<div class="c" style="left:1024px;top:483px;width:91px;height:25px"><div class="t" style="left:4.50px;top:3.00px;font-size:17.9px;color:#222;transform:scaleX(1.0096);">1009</div></div>
<div class="c" style="left:1116px;top:483px;width:127px;height:25px"><div class="t" style="left:4.50px;top:3.00px;font-size:17.9px;color:#222;transform:scaleX(0.9750);">Purchase Rate</div></div>
<div class="c" style="left:1244px;top:483px;width:130px;height:25px"><div class="t" style="left:4.50px;top:3.00px;font-size:17.9px;color:#222;transform:scaleX(0.9504);">APPFT</div></div>
<div class="c" style="left:1375px;top:483px;width:132px;height:25px"><div class="t" style="left:4.50px;top:3.00px;font-size:17.9px;color:#222;transform:scaleX(1.0096);">1</div></div>
<div class="c" style="left:1508px;top:483px;width:223px;height:25px"><div class="t" style="left:4.50px;top:3.00px;font-size:17.9px;color:#222;transform:scaleX(0.9838);">Not Required</div></div>
<div class="c" style="left:36px;top:509px;width:55px;height:25px"><div class="t" style="left:17.45px;top:3.00px;font-size:17.9px;color:#222;transform:scaleX(1.0096);">12</div></div>
<div class="c" style="left:92px;top:509px;width:90px;height:25px"><div class="t" style="left:4.50px;top:3.00px;font-size:17.9px;color:#6f6f6f;transform:scaleX(1.0096);">2323295</div></div>
<div class="c" style="left:183px;top:509px;width:281px;height:25px"><div class="t" style="left:4.50px;top:3.00px;font-size:17.9px;color:#222;transform:scaleX(0.9858);">Eat Insulated Lunch Box</div></div>
<div class="c" style="left:465px;top:509px;width:155px;height:25px"><div class="t" style="left:1.60px;top:3.00px;font-size:17.9px;color:#222;transform:scaleX(1.0101);">Applicable</div></div>
<div class="c" style="left:621px;top:509px;width:132px;height:25px"><div class="t" style="left:4.50px;top:3.00px;font-size:17.9px;color:#222;transform:scaleX(1.0116);">Profile 1</div></div>
<div class="c" style="left:754px;top:509px;width:179px;height:25px"><div class="t" style="left:4.50px;top:3.00px;font-size:17.9px;color:#222;transform:scaleX(1.0037);">No</div></div>
<div class="c" style="left:934px;top:509px;width:89px;height:25px"><div class="t" style="left:4.50px;top:3.00px;font-size:17.9px;color:#222;transform:scaleX(0.9165);">GST 18%</div></div>
<div class="c" style="left:1024px;top:509px;width:91px;height:25px"><div class="t" style="left:4.50px;top:3.00px;font-size:17.9px;color:#222;transform:scaleX(1.0096);">1009</div></div>
<div class="c" style="left:1116px;top:509px;width:127px;height:25px"><div class="t" style="left:4.50px;top:3.00px;font-size:17.9px;color:#222;transform:scaleX(0.9750);">Purchase Rate</div></div>
<div class="c" style="left:1244px;top:509px;width:130px;height:25px"><div class="t" style="left:4.50px;top:3.00px;font-size:17.9px;color:#222;transform:scaleX(0.9504);">APPFT</div></div>
<div class="c" style="left:1375px;top:509px;width:132px;height:25px"><div class="t" style="left:4.50px;top:3.00px;font-size:17.9px;color:#222;transform:scaleX(1.0096);">1</div></div>
<div class="c" style="left:1508px;top:509px;width:223px;height:25px"><div class="t" style="left:4.50px;top:3.00px;font-size:17.9px;color:#222;transform:scaleX(0.9838);">Not Required</div></div>
<div class="c" style="left:36px;top:535px;width:55px;height:25px"><div class="t" style="left:17.45px;top:3.00px;font-size:17.9px;color:#222;transform:scaleX(1.0096);">13</div></div>
<div class="c" style="left:92px;top:535px;width:90px;height:25px"><div class="t" style="left:4.50px;top:3.00px;font-size:17.9px;color:#6f6f6f;transform:scaleX(1.0096);">10022</div></div>
<div class="c" style="left:183px;top:535px;width:281px;height:25px"><div class="t" style="left:4.50px;top:3.00px;font-size:17.9px;color:#222;transform:scaleX(0.9422);">KALYANA SEERVARISAI SILVERS</div></div>
<div class="c" style="left:465px;top:535px;width:155px;height:25px"><div class="t" style="left:1.60px;top:3.00px;font-size:17.9px;color:#8a8a8a;transform:scaleX(1.0101);">Applicable</div></div>
<div class="c" style="left:621px;top:535px;width:132px;height:25px"><div class="t" style="left:4.50px;top:3.00px;font-size:17.9px;color:#222;transform:scaleX(1.0116);">Profile 1</div></div>
<div class="c" style="left:754px;top:535px;width:179px;height:25px"><div class="t" style="left:4.50px;top:3.00px;font-size:17.9px;color:#222;transform:scaleX(1.0037);">No</div></div>
<div class="c" style="left:934px;top:535px;width:89px;height:25px"><div class="t" style="left:4.50px;top:3.00px;font-size:17.9px;color:#222;transform:scaleX(0.9165);">GST 18%</div></div>
<div class="c" style="left:1024px;top:535px;width:91px;height:25px"><div class="t" style="left:4.50px;top:3.00px;font-size:17.9px;color:#222;transform:scaleX(1.0096);">1009</div></div>
<div class="c" style="left:1116px;top:535px;width:127px;height:25px"><div class="t" style="left:4.50px;top:3.00px;font-size:17.9px;color:#222;transform:scaleX(0.9750);">Purchase Rate</div></div>
<div class="c" style="left:1375px;top:535px;width:132px;height:25px"><div class="t" style="left:4.50px;top:3.00px;font-size:17.9px;color:#222;transform:scaleX(1.0096);">1</div></div>
<div class="c" style="left:1508px;top:535px;width:223px;height:25px"><div class="t" style="left:4.50px;top:3.00px;font-size:17.9px;color:#222;transform:scaleX(0.9838);">Not Required</div></div>
<div class="c" style="left:36px;top:561px;width:55px;height:24px"><div class="t" style="left:17.45px;top:3.00px;font-size:17.9px;color:#222;transform:scaleX(1.0096);">14</div></div>
<div class="c" style="left:92px;top:561px;width:90px;height:24px"><div class="t" style="left:4.50px;top:3.00px;font-size:17.9px;color:#6f6f6f;transform:scaleX(1.0096);">2323276</div></div>
<div class="c" style="left:183px;top:561px;width:281px;height:24px"><div class="t" style="left:4.50px;top:3.00px;font-size:17.9px;color:#222;transform:scaleX(0.9162);">.SUGAR REPACK 2 KG</div></div>
<div class="c" style="left:465px;top:561px;width:155px;height:24px"><div class="t" style="left:1.60px;top:3.00px;font-size:17.9px;color:#222;transform:scaleX(1.0101);">Applicable</div></div>
<div class="c" style="left:621px;top:561px;width:132px;height:24px"><div class="t" style="left:4.50px;top:3.00px;font-size:17.9px;color:#222;transform:scaleX(1.0116);">Profile 1</div></div>
<div class="c" style="left:754px;top:561px;width:179px;height:24px"><div class="t" style="left:4.50px;top:3.00px;font-size:17.9px;color:#222;transform:scaleX(1.0037);">No</div></div>
<div class="c" style="left:934px;top:561px;width:89px;height:24px"><div class="t" style="left:4.50px;top:3.00px;font-size:17.9px;color:#222;transform:scaleX(0.9165);">GST 18%</div></div>
<div class="c" style="left:1024px;top:561px;width:91px;height:24px"><div class="t" style="left:4.50px;top:3.00px;font-size:17.9px;color:#222;transform:scaleX(1.0096);">1701</div></div>
<div class="c" style="left:1116px;top:561px;width:127px;height:24px"><div class="t" style="left:4.50px;top:3.00px;font-size:17.9px;color:#222;transform:scaleX(0.9750);">Purchase Rate</div></div>
<div class="c" style="left:1375px;top:561px;width:132px;height:24px"><div class="t" style="left:4.50px;top:3.00px;font-size:17.9px;color:#222;transform:scaleX(1.0096);">1</div></div>
<div class="c" style="left:1508px;top:561px;width:223px;height:24px"><div class="t" style="left:4.50px;top:3.00px;font-size:17.9px;color:#222;transform:scaleX(0.9838);">Not Required</div></div>
<div class="c" style="left:36px;top:586px;width:55px;height:25px"><div class="t" style="left:17.45px;top:3.00px;font-size:17.9px;color:#222;transform:scaleX(1.0096);">15</div></div>
<div class="c" style="left:92px;top:586px;width:90px;height:25px"><div class="t" style="left:4.50px;top:3.00px;font-size:17.9px;color:#6f6f6f;transform:scaleX(1.0096);">60</div></div>
<div class="c" style="left:183px;top:586px;width:281px;height:25px"><div class="t" style="left:4.50px;top:3.00px;font-size:17.9px;color:#222;transform:scaleX(0.9137);">FITNESS ACCESSORIES YOGA STRAP</div></div>
<div class="c" style="left:465px;top:586px;width:155px;height:25px"><div class="t" style="left:1.60px;top:3.00px;font-size:17.9px;color:#222;transform:scaleX(1.0101);">Applicable</div></div>
<div class="c" style="left:621px;top:586px;width:132px;height:25px"><div class="t" style="left:4.50px;top:3.00px;font-size:17.9px;color:#222;transform:scaleX(1.0116);">Profile 1</div></div>
<div class="c" style="left:754px;top:586px;width:179px;height:25px"><div class="t" style="left:4.50px;top:3.00px;font-size:17.9px;color:#222;transform:scaleX(1.0037);">No</div></div>
<div class="c" style="left:934px;top:586px;width:89px;height:25px"><div class="t" style="left:4.50px;top:3.00px;font-size:17.9px;color:#222;transform:scaleX(0.9165);">GST 18%</div></div>
<div class="c" style="left:1024px;top:586px;width:91px;height:25px"><div class="t" style="left:4.50px;top:3.00px;font-size:17.9px;color:#222;transform:scaleX(1.0096);">1701</div></div>
<div class="c" style="left:1116px;top:586px;width:127px;height:25px"><div class="t" style="left:4.50px;top:3.00px;font-size:17.9px;color:#222;transform:scaleX(0.9750);">Purchase Rate</div></div>
<div class="c" style="left:1375px;top:586px;width:132px;height:25px"><div class="t" style="left:4.50px;top:3.00px;font-size:17.9px;color:#222;transform:scaleX(1.0096);">1</div></div>
<div class="c" style="left:1508px;top:586px;width:223px;height:25px"><div class="t" style="left:4.50px;top:3.00px;font-size:17.9px;color:#222;transform:scaleX(0.9838);">Not Required</div></div>
<div class="c" style="left:1732px;top:586px;width:132px;height:25px"><div class="t" style="left:4.50px;top:3.00px;font-size:17.9px;color:#222;transform:scaleX(0.9070);">FITNESS ACCESSORIES</div></div>
<div class="c" style="left:36px;top:612px;width:55px;height:25px"><div class="t" style="left:17.45px;top:3.00px;font-size:17.9px;color:#222;transform:scaleX(1.0096);">16</div></div>
<div class="c" style="left:92px;top:612px;width:90px;height:25px"><div class="t" style="left:4.50px;top:3.00px;font-size:17.9px;color:#6f6f6f;transform:scaleX(1.0096);">2323277</div></div>
<div class="c" style="left:183px;top:612px;width:281px;height:25px"><div class="t" style="left:4.50px;top:3.00px;font-size:17.9px;color:#222;transform:scaleX(0.9162);">.SUGAR REPACK 3 KG</div></div>
<div class="c" style="left:465px;top:612px;width:155px;height:25px"><div class="t" style="left:1.60px;top:3.00px;font-size:17.9px;color:#222;transform:scaleX(1.0101);">Applicable</div></div>
<div class="c" style="left:621px;top:612px;width:132px;height:25px"><div class="t" style="left:4.50px;top:3.00px;font-size:17.9px;color:#222;transform:scaleX(1.0116);">Profile 1</div></div>
<div class="c" style="left:754px;top:612px;width:179px;height:25px"><div class="t" style="left:4.50px;top:3.00px;font-size:17.9px;color:#222;transform:scaleX(1.0037);">No</div></div>
<div class="c" style="left:934px;top:612px;width:89px;height:25px"><div class="t" style="left:4.50px;top:3.00px;font-size:17.9px;color:#222;transform:scaleX(0.9165);">GST 18%</div></div>
<div class="c" style="left:1024px;top:612px;width:91px;height:25px"><div class="t" style="left:4.50px;top:3.00px;font-size:17.9px;color:#222;transform:scaleX(1.0096);">1701</div></div>
<div class="c" style="left:1116px;top:612px;width:127px;height:25px"><div class="t" style="left:4.50px;top:3.00px;font-size:17.9px;color:#222;transform:scaleX(0.9750);">Purchase Rate</div></div>
<div class="c" style="left:1375px;top:612px;width:132px;height:25px"><div class="t" style="left:4.50px;top:3.00px;font-size:17.9px;color:#222;transform:scaleX(1.0096);">1</div></div>
<div class="c" style="left:1508px;top:612px;width:223px;height:25px"><div class="t" style="left:4.50px;top:3.00px;font-size:17.9px;color:#222;transform:scaleX(0.9838);">Not Required</div></div>
<div class="c" style="left:36px;top:638px;width:55px;height:25px"><div class="t" style="left:17.45px;top:3.00px;font-size:17.9px;color:#222;transform:scaleX(1.0096);">17</div></div>
<div class="c" style="left:92px;top:638px;width:90px;height:25px"><div class="t" style="left:4.50px;top:3.00px;font-size:17.9px;color:#6f6f6f;transform:scaleX(1.0096);">2323273</div></div>
<div class="c" style="left:183px;top:638px;width:281px;height:25px"><div class="t" style="left:4.50px;top:3.00px;font-size:17.9px;color:#222;transform:scaleX(0.9126);">.SUGAR BULK</div></div>
<div class="c" style="left:465px;top:638px;width:155px;height:25px"><div class="t" style="left:1.60px;top:3.00px;font-size:17.9px;color:#222;transform:scaleX(1.0101);">Applicable</div></div>
<div class="c" style="left:621px;top:638px;width:132px;height:25px"><div class="t" style="left:4.50px;top:3.00px;font-size:17.9px;color:#222;transform:scaleX(1.0116);">Profile 1</div></div>
<div class="c" style="left:754px;top:638px;width:179px;height:25px"><div class="t" style="left:4.50px;top:3.00px;font-size:17.9px;color:#222;transform:scaleX(1.0037);">No</div></div>
<div class="c" style="left:934px;top:638px;width:89px;height:25px"><div class="t" style="left:4.50px;top:3.00px;font-size:17.9px;color:#222;transform:scaleX(0.9165);">GST 18%</div></div>
<div class="c" style="left:1024px;top:638px;width:91px;height:25px"><div class="t" style="left:4.50px;top:3.00px;font-size:17.9px;color:#222;transform:scaleX(1.0096);">1701</div></div>
<div class="c" style="left:1116px;top:638px;width:127px;height:25px"><div class="t" style="left:4.50px;top:3.00px;font-size:17.9px;color:#222;transform:scaleX(0.9750);">Purchase Rate</div></div>
<div class="c" style="left:1244px;top:638px;width:130px;height:25px"><div class="t" style="left:4.50px;top:3.00px;font-size:17.9px;color:#222;transform:scaleX(1.0560);">test</div></div>
<div class="c" style="left:1375px;top:638px;width:132px;height:25px"><div class="t" style="left:4.50px;top:3.00px;font-size:17.9px;color:#222;transform:scaleX(1.0096);">1</div></div>
<div class="c" style="left:1508px;top:638px;width:223px;height:25px"><div class="t" style="left:4.50px;top:3.00px;font-size:17.9px;color:#222;transform:scaleX(0.9838);">Not Required</div></div>
<div class="c" style="left:36px;top:664px;width:55px;height:24px"><div class="t" style="left:17.45px;top:3.00px;font-size:17.9px;color:#222;transform:scaleX(1.0096);">18</div></div>
<div class="c" style="left:92px;top:664px;width:90px;height:24px"><div class="t" style="left:4.50px;top:3.00px;font-size:17.9px;color:#6f6f6f;transform:scaleX(1.0096);">2323292</div></div>
<div class="c" style="left:183px;top:664px;width:281px;height:24px"><div class="t" style="left:4.50px;top:3.00px;font-size:17.9px;color:#222;transform:scaleX(0.9936);">Battery Car Toy</div></div>
<div class="c" style="left:465px;top:664px;width:155px;height:24px"><div class="t" style="left:1.60px;top:3.00px;font-size:17.9px;color:#222;transform:scaleX(1.0101);">Applicable</div></div>
<div class="c" style="left:621px;top:664px;width:132px;height:24px"><div class="t" style="left:4.50px;top:3.00px;font-size:17.9px;color:#222;transform:scaleX(1.0116);">Profile 1</div></div>
<div class="c" style="left:754px;top:664px;width:179px;height:24px"><div class="t" style="left:4.50px;top:3.00px;font-size:17.9px;color:#222;transform:scaleX(1.0037);">No</div></div>
<div class="c" style="left:934px;top:664px;width:89px;height:24px"><div class="t" style="left:4.50px;top:3.00px;font-size:17.9px;color:#222;transform:scaleX(0.9165);">GST 18%</div></div>
<div class="c" style="left:1024px;top:664px;width:91px;height:24px"><div class="t" style="left:4.50px;top:3.00px;font-size:17.9px;color:#222;transform:scaleX(1.0096);">1701</div></div>
<div class="c" style="left:1116px;top:664px;width:127px;height:24px"><div class="t" style="left:4.50px;top:3.00px;font-size:17.9px;color:#222;transform:scaleX(0.9750);">Purchase Rate</div></div>
<div class="c" style="left:1375px;top:664px;width:132px;height:24px"><div class="t" style="left:4.50px;top:3.00px;font-size:17.9px;color:#222;transform:scaleX(1.0096);">1</div></div>
<div class="c" style="left:1508px;top:664px;width:223px;height:24px"><div class="t" style="left:4.50px;top:3.00px;font-size:17.9px;color:#222;transform:scaleX(0.9838);">Not Required</div></div>
<div class="c" style="left:36px;top:689px;width:55px;height:25px"><div class="t" style="left:17.45px;top:3.00px;font-size:17.9px;color:#222;transform:scaleX(1.0096);">19</div></div>
<div class="c" style="left:92px;top:689px;width:90px;height:25px"><div class="t" style="left:4.50px;top:3.00px;font-size:17.9px;color:#6f6f6f;transform:scaleX(1.0096);">2323275</div></div>
<div class="c" style="left:183px;top:689px;width:281px;height:25px"><div class="t" style="left:4.50px;top:3.00px;font-size:17.9px;color:#222;transform:scaleX(0.9162);">.SUGAR REPACK 1 KG</div></div>
<div class="c" style="left:465px;top:689px;width:155px;height:25px"><div class="t" style="left:1.60px;top:3.00px;font-size:17.9px;color:#222;transform:scaleX(1.0101);">Applicable</div></div>
<div class="c" style="left:621px;top:689px;width:132px;height:25px"><div class="t" style="left:4.50px;top:3.00px;font-size:17.9px;color:#222;transform:scaleX(1.0116);">Profile 1</div></div>
<div class="c" style="left:754px;top:689px;width:179px;height:25px"><div class="t" style="left:4.50px;top:3.00px;font-size:17.9px;color:#222;transform:scaleX(1.0037);">No</div></div>
<div class="c" style="left:934px;top:689px;width:89px;height:25px"><div class="t" style="left:4.50px;top:3.00px;font-size:17.9px;color:#222;transform:scaleX(0.9165);">GST 18%</div></div>
<div class="c" style="left:1024px;top:689px;width:91px;height:25px"><div class="t" style="left:4.50px;top:3.00px;font-size:17.9px;color:#222;transform:scaleX(1.0096);">1701</div></div>
<div class="c" style="left:1116px;top:689px;width:127px;height:25px"><div class="t" style="left:4.50px;top:3.00px;font-size:17.9px;color:#222;transform:scaleX(0.9750);">Purchase Rate</div></div>
<div class="c" style="left:1375px;top:689px;width:132px;height:25px"><div class="t" style="left:4.50px;top:3.00px;font-size:17.9px;color:#222;transform:scaleX(1.0096);">1</div></div>
<div class="c" style="left:1508px;top:689px;width:223px;height:25px"><div class="t" style="left:4.50px;top:3.00px;font-size:17.9px;color:#222;transform:scaleX(0.9838);">Not Required</div></div>
<div class="c" style="left:36px;top:715px;width:55px;height:25px"><div class="t" style="left:17.45px;top:3.00px;font-size:17.9px;color:#222;transform:scaleX(1.0096);">20</div></div>
<div class="c" style="left:92px;top:715px;width:90px;height:25px"><div class="t" style="left:4.50px;top:3.00px;font-size:17.9px;color:#6f6f6f;transform:scaleX(1.0096);">2323274</div></div>
<div class="c" style="left:183px;top:715px;width:281px;height:25px"><div class="t" style="left:4.50px;top:3.00px;font-size:17.9px;color:#222;transform:scaleX(0.9327);">.SUGAR REPACK 500 GM</div></div>
<div class="c" style="left:465px;top:715px;width:155px;height:25px"><div class="t" style="left:1.60px;top:3.00px;font-size:17.9px;color:#222;transform:scaleX(1.0101);">Applicable</div></div>
<div class="c" style="left:621px;top:715px;width:132px;height:25px"><div class="t" style="left:4.50px;top:3.00px;font-size:17.9px;color:#222;transform:scaleX(1.0116);">Profile 1</div></div>
<div class="c" style="left:754px;top:715px;width:179px;height:25px"><div class="t" style="left:4.50px;top:3.00px;font-size:17.9px;color:#222;transform:scaleX(1.0037);">No</div></div>
<div class="c" style="left:934px;top:715px;width:89px;height:25px"><div class="t" style="left:4.50px;top:3.00px;font-size:17.9px;color:#222;transform:scaleX(0.9165);">GST 18%</div></div>
<div class="c" style="left:1024px;top:715px;width:91px;height:25px"><div class="t" style="left:4.50px;top:3.00px;font-size:17.9px;color:#222;transform:scaleX(1.0096);">1701</div></div>
<div class="c" style="left:1116px;top:715px;width:127px;height:25px"><div class="t" style="left:4.50px;top:3.00px;font-size:17.9px;color:#222;transform:scaleX(0.9750);">Purchase Rate</div></div>
<div class="c" style="left:1375px;top:715px;width:132px;height:25px"><div class="t" style="left:4.50px;top:3.00px;font-size:17.9px;color:#222;transform:scaleX(1.0096);">1</div></div>
<div class="c" style="left:1508px;top:715px;width:223px;height:25px"><div class="t" style="left:4.50px;top:3.00px;font-size:17.9px;color:#222;transform:scaleX(0.9838);">Not Required</div></div>
<div class="c" style="left:36px;top:741px;width:55px;height:25px"><div class="t" style="left:17.45px;top:3.00px;font-size:17.9px;color:#222;transform:scaleX(1.0096);">21</div></div>
<div class="c" style="left:92px;top:741px;width:90px;height:25px"><div class="t" style="left:4.50px;top:3.00px;font-size:17.9px;color:#6f6f6f;transform:scaleX(1.0096);">582</div></div>
<div class="c" style="left:183px;top:741px;width:281px;height:25px"><div class="t" style="left:4.50px;top:3.00px;font-size:17.9px;color:#222;transform:scaleX(0.9368);">I PHONE 15 PLUS</div></div>
<div class="c" style="left:465px;top:741px;width:155px;height:25px"><div class="t" style="left:1.60px;top:3.00px;font-size:17.9px;color:#222;transform:scaleX(1.0101);">Applicable</div></div>
<div class="c" style="left:621px;top:741px;width:132px;height:25px"><div class="t" style="left:4.50px;top:3.00px;font-size:17.9px;color:#222;transform:scaleX(1.0116);">Profile 1</div></div>
<div class="c" style="left:754px;top:741px;width:179px;height:25px"><div class="t" style="left:4.50px;top:3.00px;font-size:17.9px;color:#222;transform:scaleX(1.0037);">No</div></div>
<div class="c" style="left:934px;top:741px;width:89px;height:25px"><div class="t" style="left:4.50px;top:3.00px;font-size:17.9px;color:#222;transform:scaleX(0.9165);">GST 18%</div></div>
<div class="c" style="left:1024px;top:741px;width:91px;height:25px"><div class="t" style="left:4.50px;top:3.00px;font-size:17.9px;color:#222;transform:scaleX(1.0096);">20169099</div></div>
<div class="c" style="left:1116px;top:741px;width:127px;height:25px"><div class="t" style="left:4.50px;top:3.00px;font-size:17.9px;color:#222;transform:scaleX(0.9750);">Purchase Rate</div></div>
<div class="c" style="left:1375px;top:741px;width:132px;height:25px"><div class="t" style="left:4.50px;top:3.00px;font-size:17.9px;color:#222;transform:scaleX(1.0096);">1</div></div>
<div class="c" style="left:1508px;top:741px;width:223px;height:25px"><div class="t" style="left:4.50px;top:3.00px;font-size:17.9px;color:#222;transform:scaleX(0.9838);">Not Required</div></div>
<div class="c" style="left:36px;top:767px;width:55px;height:24px"><div class="t" style="left:17.45px;top:3.00px;font-size:17.9px;color:#222;transform:scaleX(1.0096);">22</div></div>
<div class="c" style="left:92px;top:767px;width:90px;height:24px"><div class="t" style="left:4.50px;top:3.00px;font-size:17.9px;color:#6f6f6f;transform:scaleX(1.0096);">2323270</div></div>
<div class="c" style="left:183px;top:767px;width:281px;height:24px"><div class="t" style="left:4.50px;top:3.00px;font-size:17.9px;color:#222;transform:scaleX(0.9344);">NEW REPACK ITEM 1KG</div></div>
<div class="c" style="left:465px;top:767px;width:155px;height:24px"><div class="t" style="left:1.60px;top:3.00px;font-size:17.9px;color:#222;transform:scaleX(1.0101);">Applicable</div></div>
<div class="c" style="left:621px;top:767px;width:132px;height:24px"><div class="t" style="left:4.50px;top:3.00px;font-size:17.9px;color:#222;transform:scaleX(1.0116);">Profile 1</div></div>
<div class="c" style="left:754px;top:767px;width:179px;height:24px"><div class="t" style="left:4.50px;top:3.00px;font-size:17.9px;color:#222;transform:scaleX(1.0037);">No</div></div>
<div class="c" style="left:934px;top:767px;width:89px;height:24px"><div class="t" style="left:4.50px;top:3.00px;font-size:17.9px;color:#222;transform:scaleX(0.9165);">GST 18%</div></div>
<div class="c" style="left:1024px;top:767px;width:91px;height:24px"><div class="t" style="left:4.50px;top:3.00px;font-size:17.9px;color:#222;transform:scaleX(1.0096);">20169099</div></div>
<div class="c" style="left:1116px;top:767px;width:127px;height:24px"><div class="t" style="left:4.50px;top:3.00px;font-size:17.9px;color:#222;transform:scaleX(0.9750);">Purchase Rate</div></div>
<div class="c" style="left:1375px;top:767px;width:132px;height:24px"><div class="t" style="left:4.50px;top:3.00px;font-size:17.9px;color:#222;transform:scaleX(1.0096);">1</div></div>
<div class="c" style="left:1508px;top:767px;width:223px;height:24px"><div class="t" style="left:4.50px;top:3.00px;font-size:17.9px;color:#222;transform:scaleX(0.9838);">Not Required</div></div>
<div class="c" style="left:36px;top:792px;width:55px;height:6px"><div class="t" style="left:17.45px;top:3.00px;font-size:17.9px;color:#222;transform:scaleX(1.0096);">23</div></div>
<div class="c" style="left:92px;top:792px;width:90px;height:6px"><div class="t" style="left:4.50px;top:3.00px;font-size:17.9px;color:#6f6f6f;transform:scaleX(1.0096);">2323269</div></div>
<div class="c" style="left:183px;top:792px;width:281px;height:6px"><div class="t" style="left:4.50px;top:3.00px;font-size:17.9px;color:#222;transform:scaleX(0.9390);">NEW BULK ITEM</div></div>
<div class="c" style="left:465px;top:792px;width:155px;height:6px"><div class="t" style="left:1.60px;top:3.00px;font-size:17.9px;color:#222;transform:scaleX(1.0101);">Applicable</div></div>
<div class="c" style="left:621px;top:792px;width:132px;height:6px"><div class="t" style="left:4.50px;top:3.00px;font-size:17.9px;color:#222;transform:scaleX(1.0116);">Profile 1</div></div>
<div class="c" style="left:754px;top:792px;width:179px;height:6px"><div class="t" style="left:4.50px;top:3.00px;font-size:17.9px;color:#222;transform:scaleX(1.0037);">No</div></div>
<div class="c" style="left:934px;top:792px;width:89px;height:6px"><div class="t" style="left:4.50px;top:3.00px;font-size:17.9px;color:#222;transform:scaleX(0.9165);">GST 18%</div></div>
<div class="c" style="left:1024px;top:792px;width:91px;height:6px"><div class="t" style="left:4.50px;top:3.00px;font-size:17.9px;color:#222;transform:scaleX(1.0096);">20169099</div></div>
<div class="c" style="left:1116px;top:792px;width:127px;height:6px"><div class="t" style="left:4.50px;top:3.00px;font-size:17.9px;color:#222;transform:scaleX(0.9750);">Purchase Rate</div></div>
<div class="c" style="left:1375px;top:792px;width:132px;height:6px"><div class="t" style="left:4.50px;top:3.00px;font-size:17.9px;color:#222;transform:scaleX(1.0096);">1</div></div>
<div class="c" style="left:1508px;top:792px;width:223px;height:6px"><div class="t" style="left:4.50px;top:3.00px;font-size:17.9px;color:#222;transform:scaleX(0.9838);">Not Required</div></div>
<div class="r" style="left:35px;top:196px;width:1829px;height:1px;background:#cccccc;"></div>
<div class="r" style="left:35px;top:225px;width:1829px;height:1px;background:#cccccc;"></div>
<div class="r" style="left:35px;top:251px;width:1829px;height:1px;background:#cccccc;"></div>
<div class="r" style="left:35px;top:276px;width:1829px;height:1px;background:#cccccc;"></div>
<div class="r" style="left:35px;top:302px;width:1829px;height:1px;background:#cccccc;"></div>
<div class="r" style="left:35px;top:328px;width:1829px;height:1px;background:#cccccc;"></div>
<div class="r" style="left:35px;top:354px;width:1829px;height:1px;background:#cccccc;"></div>
<div class="r" style="left:35px;top:379px;width:1829px;height:1px;background:#cccccc;"></div>
<div class="r" style="left:35px;top:405px;width:1829px;height:1px;background:#cccccc;"></div>
<div class="r" style="left:35px;top:431px;width:1829px;height:1px;background:#cccccc;"></div>
<div class="r" style="left:35px;top:457px;width:1829px;height:1px;background:#cccccc;"></div>
<div class="r" style="left:35px;top:482px;width:1829px;height:1px;background:#cccccc;"></div>
<div class="r" style="left:35px;top:508px;width:1829px;height:1px;background:#cccccc;"></div>
<div class="r" style="left:35px;top:534px;width:1829px;height:1px;background:#cccccc;"></div>
<div class="r" style="left:35px;top:560px;width:1829px;height:1px;background:#cccccc;"></div>
<div class="r" style="left:35px;top:585px;width:1829px;height:1px;background:#cccccc;"></div>
<div class="r" style="left:35px;top:611px;width:1829px;height:1px;background:#cccccc;"></div>
<div class="r" style="left:35px;top:637px;width:1829px;height:1px;background:#cccccc;"></div>
<div class="r" style="left:35px;top:663px;width:1829px;height:1px;background:#cccccc;"></div>
<div class="r" style="left:35px;top:688px;width:1829px;height:1px;background:#cccccc;"></div>
<div class="r" style="left:35px;top:714px;width:1829px;height:1px;background:#cccccc;"></div>
<div class="r" style="left:35px;top:740px;width:1829px;height:1px;background:#cccccc;"></div>
<div class="r" style="left:35px;top:766px;width:1829px;height:1px;background:#cccccc;"></div>
<div class="r" style="left:35px;top:791px;width:1829px;height:1px;background:#cccccc;"></div>
<div class="r" style="left:35px;top:196px;width:1px;height:602px;background:#cccccc;"></div>
<div class="r" style="left:91px;top:196px;width:1px;height:602px;background:#cccccc;"></div>
<div class="r" style="left:182px;top:196px;width:1px;height:602px;background:#cccccc;"></div>
<div class="r" style="left:464px;top:196px;width:1px;height:602px;background:#cccccc;"></div>
<div class="r" style="left:620px;top:196px;width:1px;height:602px;background:#cccccc;"></div>
<div class="r" style="left:753px;top:196px;width:1px;height:602px;background:#cccccc;"></div>
<div class="r" style="left:933px;top:196px;width:1px;height:602px;background:#cccccc;"></div>
<div class="r" style="left:1023px;top:196px;width:1px;height:602px;background:#cccccc;"></div>
<div class="r" style="left:1115px;top:196px;width:1px;height:602px;background:#cccccc;"></div>
<div class="r" style="left:1243px;top:196px;width:1px;height:602px;background:#cccccc;"></div>
<div class="r" style="left:1374px;top:196px;width:1px;height:602px;background:#cccccc;"></div>
<div class="r" style="left:1507px;top:196px;width:1px;height:602px;background:#cccccc;"></div>
<div class="r" style="left:1731px;top:196px;width:1px;height:602px;background:#cccccc;"></div>
<div class="r" style="left:1864px;top:196px;width:21px;height:602px;background:#f1f1f1;"></div>
<svg class="r" style="left:1869px;top:204px" width="12" height="7"><path d="M1 6h10L6 1z" fill="#a3a3a3"/></svg>
<div class="r" style="left:1866px;top:217px;width:17px;height:83px;background:#c1c1c1;"></div>
<svg class="r" style="left:1869px;top:783px" width="12" height="7"><path d="M1 1h10L6 6z" fill="#505050"/></svg>
<div class="r" style="left:35px;top:798px;width:1829px;height:21px;background:#f1f1f1;"></div>
<div class="r" style="left:442px;top:800px;width:289px;height:17px;background:#c1c1c1;"></div>
<svg class="r" style="left:41px;top:803px" width="8" height="12"><path d="M6.3 1.3v9.4L1.6 6z" fill="#505050"/></svg>
<svg class="r" style="left:1850px;top:803px" width="8" height="12"><path d="M1.5 1v10L6.5 6z" fill="#505050"/></svg>
<div class="r" style="left:1864px;top:798px;width:21px;height:21px;background:#dcdcdc;"></div>
<div class="r" style="left:934px;top:226px;width:89px;height:26px;background:#ffffff;"></div>
<div class="r" style="left:934px;top:225px;width:89px;height:2px;background:#5290f5;"></div>
<div class="r" style="left:934px;top:250px;width:89px;height:2px;background:#5290f5;"></div>
<div class="t" style="left:939.50px;top:229.00px;font-size:17.9px;color:#222;transform:scaleX(0.9165);">GST 18%</div>
<div class="r" style="left:1010px;top:227px;width:1px;height:21px;background:#111;"></div>
<div class="r" style="left:937px;top:252px;width:86px;height:259px;background:#f3f3f3;"></div>
<div class="c" style="left:937px;top:253px;width:86px;height:26px"><div class="t" style="left:2.80px;top:4.00px;font-size:17.9px;color:#222;transform:scaleX(0.8902);">GST 28…</div></div>
<div class="r" style="left:937px;top:279px;width:86px;height:1px;background:#ffffff;"></div>
<div class="c" style="left:937px;top:279px;width:86px;height:25px"><div class="t" style="left:2.80px;top:4.00px;font-size:17.9px;color:#222;transform:scaleX(0.8902);">GST 28…</div></div>
<div class="r" style="left:937px;top:304px;width:86px;height:1px;background:#ffffff;"></div>
<div class="c" style="left:937px;top:304px;width:86px;height:26px"><div class="t" style="left:2.80px;top:4.00px;font-size:17.9px;color:#222;transform:scaleX(0.8935);">GST 0.2…</div></div>
<div class="r" style="left:937px;top:330px;width:86px;height:1px;background:#ffffff;"></div>
<div class="c" style="left:937px;top:330px;width:86px;height:26px"><div class="t" style="left:2.80px;top:4.00px;font-size:17.9px;color:#222;transform:scaleX(0.9184);">GST 1.5%</div></div>
<div class="r" style="left:937px;top:356px;width:86px;height:1px;background:#ffffff;"></div>
<div class="c" style="left:937px;top:356px;width:86px;height:26px"><div class="t" style="left:2.80px;top:4.00px;font-size:17.9px;color:#222;transform:scaleX(0.8619);">GST 0% …</div></div>
<div class="r" style="left:937px;top:382px;width:86px;height:1px;background:#ffffff;"></div>
<div class="c" style="left:937px;top:382px;width:86px;height:25px"><div class="t" style="left:2.80px;top:4.00px;font-size:17.9px;color:#222;transform:scaleX(0.9139);">GST Ex</div></div>
<div class="r" style="left:937px;top:408px;width:86px;height:25px;background:#e6e6e6;"></div>
<div class="r" style="left:937px;top:407px;width:86px;height:1px;background:#ffffff;"></div>
<div class="c" style="left:937px;top:407px;width:86px;height:26px"><div class="t" style="left:2.80px;top:4.00px;font-size:17.9px;color:#222;transform:scaleX(0.9028);">GST 5%</div></div>
<div class="r" style="left:937px;top:433px;width:86px;height:1px;background:#ffffff;"></div>
<div class="c" style="left:937px;top:433px;width:86px;height:26px"><div class="t" style="left:2.80px;top:4.00px;font-size:17.9px;color:#222;transform:scaleX(0.9165);">GST 12%</div></div>
<div class="r" style="left:937px;top:460px;width:86px;height:24px;background:#e6e6e6;"></div>
<div class="r" style="left:937px;top:459px;width:86px;height:1px;background:#ffffff;"></div>
<div class="c" style="left:937px;top:459px;width:86px;height:25px"><div class="t" style="left:2.80px;top:4.00px;font-size:17.9px;color:#222;font-weight:bold;transform:scaleX(0.9492);">GST 18%</div></div>
<div class="r" style="left:937px;top:484px;width:86px;height:1px;background:#ffffff;"></div>
<div class="c" style="left:937px;top:484px;width:86px;height:26px"><div class="t" style="left:2.80px;top:4.00px;font-size:17.9px;color:#222;transform:scaleX(0.9165);">GST 28%</div></div>
<div class="r" style="left:1023px;top:252px;width:1px;height:259px;background:#cccccc;"></div>
<div class="r" style="left:1024px;top:252px;width:3px;height:259px;background:#ffffff;"></div>
<div class="r" style="left:1027px;top:252px;width:21px;height:259px;background:#f1f1f1;"></div>
<svg class="r" style="left:1032px;top:260px" width="12" height="7"><path d="M1 6h10L6 1z" fill="#a3a3a3"/></svg>
<div class="r" style="left:1029px;top:273px;width:17px;height:94px;background:#c1c1c1;"></div>
<div class="r" style="left:931px;top:196px;width:114px;height:295px;border:6px solid #ff0a4e"></div>
<div class="r" style="left:931px;top:215px;width:83px;height:31px;border:6px solid #ff0a4e"></div>
<div class="r" style="left:931px;top:398px;width:91px;height:28px;border:6px solid #1ad85c"></div>
</body></html>
